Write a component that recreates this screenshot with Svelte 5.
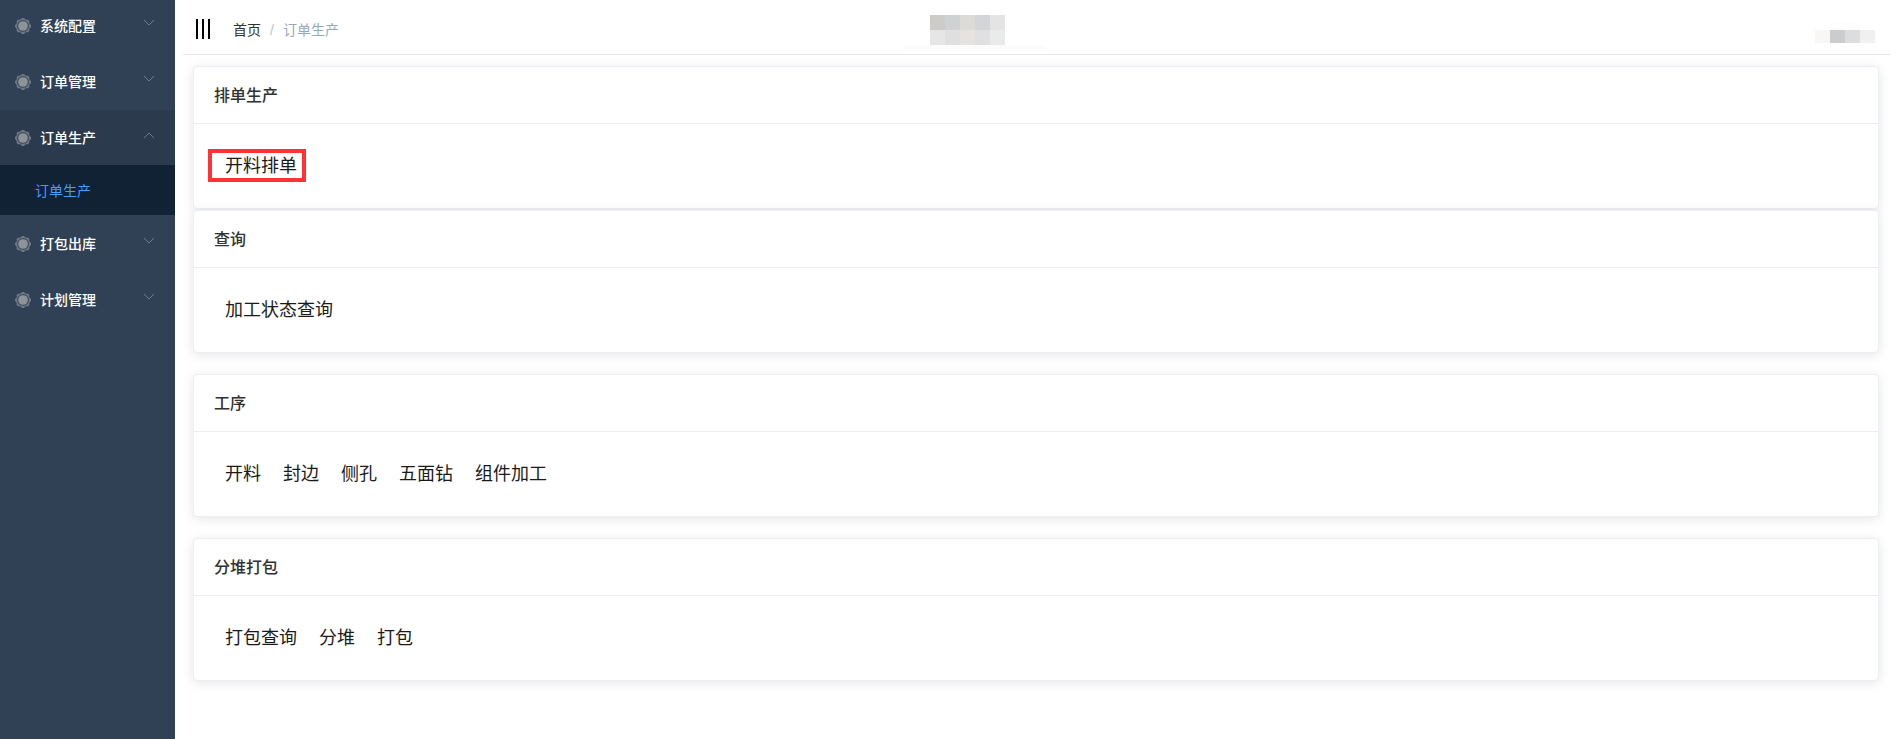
<script>
  const menus = [
    { name: '系统配置' },
    { name: '订单管理' },
    { name: '订单生产', open: true, children: ['订单生产'] },
    { name: '打包出库' },
    { name: '计划管理' }
  ];

  const cards = [
    { title: '排单生产', links: ['开料排单'], marked: true },
    { title: '查询', links: ['加工状态查询'] },
    { title: '工序', links: ['开料', '封边', '侧孔', '五面钻', '组件加工'] },
    { title: '分堆打包', links: ['打包查询', '分堆', '打包'] }
  ];

  // blurred-out bits of the header, row by row
  const titleMosaic = ['#cdccc9', '#cfd2d2', '#dddbd8', '#d3d5d8', '#e4e4e4', '#e5e6e5', '#dfdfe0', '#e5e2df', '#e0e0e3', '#e9ebea'];
  const userMosaic = ['#f8f7f5', '#cbccce', '#dcdddf', '#f0f0f0'];

  const teeth = [0, 45, 90, 135, 180, 225, 270, 315];
</script>

<div class="layout">
  <aside class="sidebar">
    <ul class="menu">
      {#each menus as item}
        <li class:open={item.open}>
          <div class="menu-title">
            <svg class="gear" viewBox="0 0 18 18" width="18" height="18">
              <circle cx="9" cy="9" r="6.600" fill="#3f4c5d" stroke="#6f7985" stroke-width="1.200" />
              {#each teeth as deg}
                <rect x="7.500" y="1" width="3" height="1.600" rx="0.600" fill="#6f7985" transform="rotate({deg} 9 9)" />
              {/each}
              <circle cx="9" cy="9" r="4.800" fill="#8e9397" />
            </svg>
            <span>{item.name}</span>
            <svg class="arrow" viewBox="0 0 12 8" width="12" height="8">
              <path d={item.open ? 'M1 7l5-5 5 5' : 'M1 1l5 5 5-5'} fill="none" stroke="#6f7b88" stroke-width="1" />
            </svg>
          </div>
          {#if item.children}
            {#each item.children as child}
              <div class="menu-child">{child}</div>
            {/each}
          {/if}
        </li>
      {/each}
    </ul>
  </aside>

  <main class="main">
    <header class="navbar">
      <div class="hamburger"><i></i><i></i><i></i></div>
      <nav class="crumbs">
        <span>首页</span>
        <span class="sep">/</span>
        <span class="current">订单生产</span>
      </nav>
      <div class="title-mosaic">
        {#each titleMosaic as c}<i style="background: {c}"></i>{/each}
      </div>
      <div class="user-mosaic">
        {#each userMosaic as c}<i style="background: {c}"></i>{/each}
      </div>
    </header>

    <section class="cards">
      {#each cards as card}
        <div class="card">
          <div class="card-header">{card.title}</div>
          <div class="card-body">
            <div class="links">
              {#each card.links as link}
                <a href="#top" class:marked={card.marked}>{link}</a>
              {/each}
            </div>
          </div>
        </div>
      {/each}
    </section>
  </main>
</div>

<style>
  :global(body) {
    margin: 0;
    background: #fff;
    font-family: "Liberation Sans", "Noto Sans CJK SC", sans-serif;
  }
  .layout {
    display: flex;
    height: 739px;
    overflow: hidden;
  }
  .sidebar {
    width: 175px;
    flex-shrink: 0;
    background: #304156;
  }
  .menu {
    list-style: none;
    margin: -2px 0 0;
    padding: 0;
  }
  .open {
    margin-bottom: 1px;
  }
  .menu-title {
    display: flex;
    align-items: center;
    height: 56px;
    padding: 0 20px 2px 14px;
    box-sizing: border-box;
    color: #fff;
    font-size: 14px;
    font-weight: 500;
  }
  .open .menu-title {
    background: #2b3a4d;
    height: 55px;
  }
  .gear {
    margin: 2px 8px 0 0;
    flex-shrink: 0;
  }
  .arrow {
    margin-left: auto;
    margin-top: -4px;
  }
  .menu-child {
    display: flex;
    align-items: center;
    height: 50px;
    padding-left: 35px;
    background: #112235;
    color: #409eff;
    font-size: 14px;
  }
  .main {
    flex: 1;
    min-width: 0;
    padding: 0 7px 0 8px;
  }
  .navbar {
    display: flex;
    align-items: center;
    height: 54px;
    border-bottom: 1px solid #e6e6e6;
    position: relative;
  }
  .hamburger {
    display: flex;
    gap: 4px;
    margin: 4px 1px 0 13px;
  }
  .hamburger i {
    width: 2px;
    height: 20px;
    background: #000;
  }
  .crumbs {
    display: flex;
    align-items: baseline;
    gap: 9px;
    margin-left: 22px;
    font-size: 14px;
    color: #303133;
    padding-top: 4px;
  }
  .sep {
    color: #c0c4cc;
  }
  .current {
    color: #97a8be;
  }
  .title-mosaic {
    position: absolute;
    left: 747px;
    top: 15px;
    display: grid;
    grid-template-columns: repeat(5, 15px);
    grid-auto-rows: 15px;
  }
  .title-mosaic::after {
    content: "";
    position: absolute;
    left: -25px;
    top: 30px;
    width: 140px;
    height: 4px;
    background: #fcfcfc;
  }
  .user-mosaic {
    position: absolute;
    left: 1632px;
    top: 30px;
    display: grid;
    grid-template-columns: repeat(4, 15px);
    grid-auto-rows: 13px;
  }
  .user-mosaic::before {
    content: "";
    position: absolute;
    left: 15px;
    top: -8px;
    width: 30px;
    height: 8px;
    background: #fdfdfd;
  }
  .cards {
    display: flex;
    flex-direction: column;
    padding: 11px 11px 0 10px;
  }
  .card {
    background: #fff;
    border: 1px solid #ebeef5;
    border-radius: 4px;
    box-shadow: 0 2px 12px 0 rgba(0, 0, 0, 0.1);
    margin-bottom: 21px;
    color: #303133;
  }
  .card:first-child {
    margin-bottom: 1px;
  }
  .card-header {
    padding: 19px 20px 17px;
    font-size: 16px;
    font-weight: 500;
    line-height: 20px;
    border-bottom: 1px solid #ebeef5;
  }
  .card-body {
    padding: 18px 20px 22px;
  }
  .links {
    display: flex;
    gap: 22px;
    height: 44px;
    align-items: center;
    padding-left: 11px;
    font-size: 18px;
  }
  .links a {
    color: #1a1a1a;
    text-decoration: none;
  }
  /* red annotation box round the first link */
  .marked {
    position: relative;
  }
  .marked::after {
    content: "";
    position: absolute;
    left: -17px;
    right: -9px;
    top: -2px;
    bottom: -5px;
    border: 4px solid #f33;
  }
</style>
